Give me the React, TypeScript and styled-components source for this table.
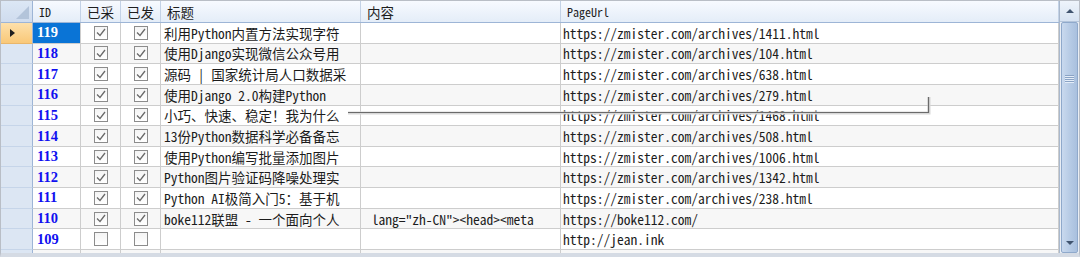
import React from 'react';
import styled, { createGlobalStyle } from 'styled-components';

const GlobalStyle = createGlobalStyle`
  html, body {
    margin: 0;
    padding: 0;
    background: #ffffff;
  }
  * {
    box-sizing: border-box;
  }
`;

const MONO = `"Noto Sans Mono CJK SC", "Liberation Mono", "Noto Sans CJK SC", monospace`;
const COLS = '32px 48px 40px 40px 200px 200px 1fr';
const ROW_H = 20.65;

const Frame = styled.div`
  width: 1080px;
  height: 257px;
  display: flex;
  border: 1px solid #b9bec6;
  border-bottom: 4px solid #d5dbe4;
  background: #ffffff;
  overflow: hidden;
  position: relative;
`;

const Grid = styled.div`
  flex: 1;
  display: flex;
  flex-direction: column;
  overflow: hidden;
`;

const HeaderRow = styled.div`
  display: grid;
  grid-template-columns: ${COLS};
  height: 22px;
  flex-shrink: 0;
  background: linear-gradient(#f7faff, #e4edf8);
  border-bottom: 1px solid #9db5d6;
`;

const HeadCell = styled.div<{ $latin?: boolean }>`
  display: flex;
  align-items: center;
  padding-left: 6px;
  border-right: 1px solid #c3d2e6;
  font-family: ${(p) => (p.$latin ? MONO : `"Noto Sans CJK SC", sans-serif`)};
  font-size: ${(p) => (p.$latin ? '12px' : '13.5px')};
  color: #1e1e1e;
  white-space: nowrap;
`;

const Corner = styled.div`
  position: relative;
  background: linear-gradient(#dce7f5, #cfdcee);
  border-right: 1px solid #9db5d6;
  overflow: hidden;
`;

const CornerMark = styled.div`
  position: absolute;
  right: 3px;
  bottom: 3px;
  width: 0;
  height: 0;
  border-left: 13px solid transparent;
  border-bottom: 13px solid #b3c4da;
`;

const Row = styled.div<{ $alt: boolean }>`
  display: grid;
  grid-template-columns: ${COLS};
  height: ${ROW_H}px;
  flex-shrink: 0;
  background: ${(p) => (p.$alt ? '#f7f7f7' : '#ffffff')};
`;

const RowHead = styled.div<{ $current: boolean }>`
  display: flex;
  align-items: center;
  padding-left: 9px;
  background: ${(p) => (p.$current ? 'linear-gradient(#fde0ab, #f9c878)' : '#dce6f3')};
  border-right: 1px solid #9db5d6;
  border-bottom: 1px solid ${(p) => (p.$current ? '#e9b66a' : '#c6d5e9')};
`;

const Pointer = styled.div`
  width: 0;
  height: 0;
  border-top: 4px solid transparent;
  border-bottom: 4px solid transparent;
  border-left: 5px solid #1f1f1f;
`;

const Cell = styled.div<{ $pad?: number; $center?: boolean }>`
  display: flex;
  align-items: center;
  justify-content: ${(p) => (p.$center ? 'center' : 'flex-start')};
  padding-left: ${(p) => p.$pad ?? 3}px;
  border-right: 1px solid #cdcdcd;
  border-bottom: 1px solid #cdcdcd;
  font-family: ${MONO};
  font-size: 13.5px;
  color: #1c1c1c;
  white-space: pre;
  overflow: hidden;
`;

const IdCell = styled(Cell)<{ $current: boolean }>`
  background: ${(p) => (p.$current ? '#0a74d6' : 'transparent')};
  color: ${(p) => (p.$current ? '#ffffff' : '#1010f0')};
  font-family: "Liberation Serif", serif;
  font-weight: 700;
  font-size: 14.5px;
`;

const Box = styled.div`
  width: 14px;
  height: 14px;
  border: 1px solid #8c8c8c;
  background: linear-gradient(#f4f4f4, #ffffff);
  display: flex;
  align-items: center;
  justify-content: center;
`;

const ScrollBar = styled.div`
  width: 20px;
  flex-shrink: 0;
  display: flex;
  flex-direction: column;
  border-left: 1px solid #a9b8cc;
  background: #e9eef5;
`;

const ScrollButton = styled.div`
  height: 21px;
  flex-shrink: 0;
  display: flex;
  align-items: center;
  justify-content: center;
  background: linear-gradient(#eef4fb, #d7e3f2);
  border-bottom: 1px solid #b4c5db;
`;

const Thumb = styled.div`
  flex: 1;
  display: flex;
  flex-direction: column;
  align-items: center;
  margin: 0 1px;
  border: 1px solid #8fa9cb;
  border-radius: 2px;
  background: linear-gradient(90deg, #c9d9ee, #b4c9e4 60%, #a9c0de);
`;

const Grip = styled.div`
  margin-top: 52px;
  display: flex;
  flex-direction: column;
  gap: 1px;
`;

const GripLine = styled.div`
  width: 9px;
  height: 1px;
  background: #8aa3c5;
  box-shadow: 0 1px 0 #e4edf8;
`;

const DownArrow = styled.div`
  margin-top: auto;
  margin-bottom: 7px;
  width: 0;
  height: 0;
  border-left: 4px solid transparent;
  border-right: 4px solid transparent;
  border-top: 4px solid #40546f;
`;

const UpArrow = styled.div`
  width: 0;
  height: 0;
  border-left: 4px solid transparent;
  border-right: 4px solid transparent;
  border-bottom: 4px solid #40546f;
`;

const Trace = styled.svg`
  position: absolute;
  left: 0;
  top: 0;
  pointer-events: none;
`;

interface Item {
  id: number;
  picked: boolean;
  sent: boolean;
  title: string;
  content: string;
  url: string;
}

const rows: Item[] = [
  { id: 119, picked: true, sent: true, title: '利用Python内置方法实现字符', content: '', url: 'https://zmister.com/archives/1411.html' },
  { id: 118, picked: true, sent: true, title: '使用Django实现微信公众号用', content: '', url: 'https://zmister.com/archives/104.html' },
  { id: 117, picked: true, sent: true, title: '源码 | 国家统计局人口数据采', content: '', url: 'https://zmister.com/archives/638.html' },
  { id: 116, picked: true, sent: true, title: '使用Django 2.0构建Python', content: '', url: 'https://zmister.com/archives/279.html' },
  { id: 115, picked: true, sent: true, title: '小巧、快速、稳定！我为什么', content: '', url: 'https://zmister.com/archives/1468.html' },
  { id: 114, picked: true, sent: true, title: '13份Python数据科学必备备忘', content: '', url: 'https://zmister.com/archives/508.html' },
  { id: 113, picked: true, sent: true, title: '使用Python编写批量添加图片', content: '', url: 'https://zmister.com/archives/1006.html' },
  { id: 112, picked: true, sent: true, title: 'Python图片验证码降噪处理实', content: '', url: 'https://zmister.com/archives/1342.html' },
  { id: 111, picked: true, sent: true, title: 'Python AI极简入门5：基于机', content: '', url: 'https://zmister.com/archives/238.html' },
  { id: 110, picked: true, sent: true, title: 'boke112联盟 - 一个面向个人', content: ' lang="zh-CN"><head><meta', url: 'https://boke112.com/' },
  { id: 109, picked: false, sent: false, title: '', content: '', url: 'http://jean.ink' },
  { id: 108, picked: false, sent: false, title: 'Python3 中文 csdn 博客', content: ' lang="zh"', url: 'https://blog.csdn.net/' },
];

function Check({ on }: { on: boolean }) {
  return (
    <Box>
      {on && (
        <svg width="10" height="9" viewBox="0 0 10 9">
          <path d="M1 4.5 L4 7.5 L9 1" fill="none" stroke="#6a6a6a" strokeWidth="1.3" />
        </svg>
      )}
    </Box>
  );
}

export default function App() {
  return (
    <>
      <GlobalStyle />
      <Frame>
        <Grid>
          <HeaderRow>
            <Corner>
              <CornerMark />
            </Corner>
            <HeadCell $latin>ID</HeadCell>
            <HeadCell>已采</HeadCell>
            <HeadCell>已发</HeadCell>
            <HeadCell>标题</HeadCell>
            <HeadCell>内容</HeadCell>
            <HeadCell $latin>PageUrl</HeadCell>
          </HeaderRow>
          {rows.map((r, i) => (
            <Row key={r.id} $alt={i % 2 === 1}>
              <RowHead $current={i === 0}>{i === 0 && <Pointer />}</RowHead>
              <IdCell $current={i === 0} $pad={4}>{r.id}</IdCell>
              <Cell $center $pad={0}><Check on={r.picked} /></Cell>
              <Cell $center $pad={0}><Check on={r.sent} /></Cell>
              <Cell $pad={3}>{r.title}</Cell>
              <Cell $pad={4}>{r.content}</Cell>
              <Cell $pad={2}>{r.url}</Cell>
            </Row>
          ))}
        </Grid>
        <ScrollBar>
          <ScrollButton>
            <UpArrow />
          </ScrollButton>
          <Thumb>
            <Grip>
              <GripLine />
              <GripLine />
              <GripLine />
              <GripLine />
            </Grip>
            <DownArrow />
          </Thumb>
        </ScrollBar>
        <Trace width="1080" height="257">
          <polyline points="347,112 928,112 928,96" fill="none" stroke="#d8d8d8" strokeWidth="3" />
          <polyline points="347,111.5 927.5,111.5 927.5,96" fill="none" stroke="#6b6b6b" strokeWidth="1.2" />
        </Trace>
      </Frame>
    </>
  );
}
